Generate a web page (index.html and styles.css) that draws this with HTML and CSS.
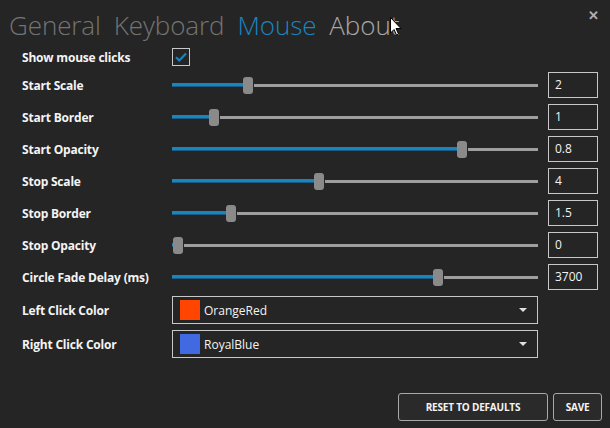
FILE: index.html
```html
<!DOCTYPE html>
<html>
<head>
    <title>Settings - Mouse</title>
    <link rel="stylesheet" href="styles.css">
</head>
<body>
    <div class="window">
        <div class="header">
            <div class="tabs">
                <span class="tab">General</span>
                <span class="tab">Keyboard</span>
                <span class="tab active">Mouse</span>
                <span class="tab hover">About</span>
            </div>
            <span class="close">&#x2715;</span>
        </div>

        <div class="form">
            <label class="check-row">Show mouse clicks</label>
            <div class="check-cell"><span class="checkbox"><svg width="12" height="10" viewBox="0 0 12 10"><path d="M1 5.2 L4.3 8.4 L11 1.4" fill="none" stroke="#1b84be" stroke-width="2.2"/></svg></span></div>
            <div></div>

            <label>Start Scale</label>
            <div class="slider"><div class="fill" style="width: 71px"></div><div class="thumb"></div><div class="rest"></div></div>
            <div class="value">2</div>

            <label>Start Border</label>
            <div class="slider"><div class="fill" style="width: 37px"></div><div class="thumb"></div><div class="rest"></div></div>
            <div class="value">1</div>

            <label>Start Opacity</label>
            <div class="slider"><div class="fill" style="width: 285px"></div><div class="thumb"></div><div class="rest"></div></div>
            <div class="value">0.8</div>

            <label>Stop Scale</label>
            <div class="slider"><div class="fill" style="width: 142px"></div><div class="thumb"></div><div class="rest"></div></div>
            <div class="value">4</div>

            <label>Stop Border</label>
            <div class="slider"><div class="fill" style="width: 54px"></div><div class="thumb"></div><div class="rest"></div></div>
            <div class="value">1.5</div>

            <label>Stop Opacity</label>
            <div class="slider"><div class="fill" style="width: 1px"></div><div class="thumb"></div><div class="rest"></div></div>
            <div class="value">0</div>

            <label>Circle Fade Delay (ms)</label>
            <div class="slider"><div class="fill" style="width: 261px"></div><div class="thumb"></div><div class="rest"></div></div>
            <div class="value">3700</div>

            <label class="combo-row">Left Click Color</label>
            <div class="combo"><span class="swatch" style="background: orangered"></span><span class="combo-text">OrangeRed</span><span class="arrow"></span></div>
            <div></div>

            <label class="combo-row">Right Click Color</label>
            <div class="combo"><span class="swatch" style="background: royalblue"></span><span class="combo-text">RoyalBlue</span><span class="arrow"></span></div>
            <div></div>
        </div>

        <div class="footer">
            <button class="btn reset">RESET TO DEFAULTS</button>
            <button class="btn save">SAVE</button>
        </div>

        <svg class="cursor" width="12" height="19" viewBox="0 0 12 19">
            <path d="M0.5 0.5 L0.5 16 L4 12.5 L6.5 18 L8.5 17 L6 11.5 L11 11.5 Z" fill="#fff" stroke="#000" stroke-width="1"/>
        </svg>
    </div>
</body>
</html>
```

FILE: styles.css
```css
body {
    margin: 0;
    background: #252525;
    color: #f2f2f2;
    font-family: 'Open Sans', 'Noto Sans', sans-serif;
}

.window {
    position: relative;
    height: 428px;
    display: flex;
    flex-direction: column;
}

.header {
    height: 45px;
    display: flex;
    justify-content: space-between;
    align-items: flex-start;
}

.tabs {
    display: flex;
    gap: 13px;
    padding-left: 9px;
    margin-top: 5px;
}

.tab {
    font-size: 26px;
    font-weight: 300;
    color: #747474;
    letter-spacing: -0.1px;
    line-height: 40px;
}

.tab.active {
    color: #1b84be;
}

.tab.hover {
    color: #a8a8a8;
}

.close {
    color: #b0b0b0;
    font-size: 13px;
    font-weight: bold;
    margin: 6px 11px 0 0;
}

.form {
    display: grid;
    grid-template-columns: 140px 366px 50px;
    grid-template-rows: 24px repeat(7, 32px) 34px 34px;
    column-gap: 10px;
    padding-left: 22px;
    align-items: center;
}

label {
    font-size: 12px;
    font-weight: bold;
    color: #f4f4f4;
    letter-spacing: -0.2px;
    white-space: nowrap;
}

.checkbox {
    display: flex;
    justify-content: center;
    align-items: center;
    width: 16px;
    height: 16px;
    border: 1px solid #c8c8c8;
}

.check-cell {
    display: flex;
}

.slider {
    display: flex;
    align-items: center;
    height: 17px;
}

.fill {
    height: 4px;
    background: #1b84be;
    box-shadow: inset 0 -1px 0 #1a5d84;
}

.thumb {
    width: 10px;
    height: 17px;
    border-radius: 3px;
    background: #8a8a8a;
}

.rest {
    flex: 1;
    height: 3px;
    background: #9e9e9e;
    margin-left: 1px;
}

.value {
    height: 24px;
    border: 1px solid #c8c8c8;
    font-size: 12px;
    line-height: 24px;
    padding-left: 6px;
    color: #f4f4f4;
}

.combo {
    height: 26px;
    border: 1px solid #c8c8c8;
    display: flex;
    align-items: center;
    padding-left: 7px;
}

.swatch {
    width: 20px;
    height: 20px;
}

.combo-text {
    flex: 1;
    font-size: 12px;
    margin-left: 4px;
    color: #f4f4f4;
}

.arrow {
    width: 0;
    height: 0;
    border-left: 4px solid transparent;
    border-right: 4px solid transparent;
    border-top: 4px solid #e0e0e0;
    margin-right: 10px;
}

.footer {
    margin-top: auto;
    display: flex;
    justify-content: flex-end;
    gap: 5px;
    padding: 0 8px 7px 0;
}

.btn {
    height: 28px;
    background: #2a2a2a;
    border: 1px solid #a8a8a8;
    border-radius: 3px;
    color: #f4f4f4;
    font-family: 'Open Sans', 'Noto Sans', sans-serif;
    font-weight: bold;
    font-size: 10px;
    letter-spacing: -0.2px;
}

.reset {
    width: 150px;
}

.save {
    width: 49px;
}

.cursor {
    position: absolute;
    left: 390px;
    top: 17px;
}
```
